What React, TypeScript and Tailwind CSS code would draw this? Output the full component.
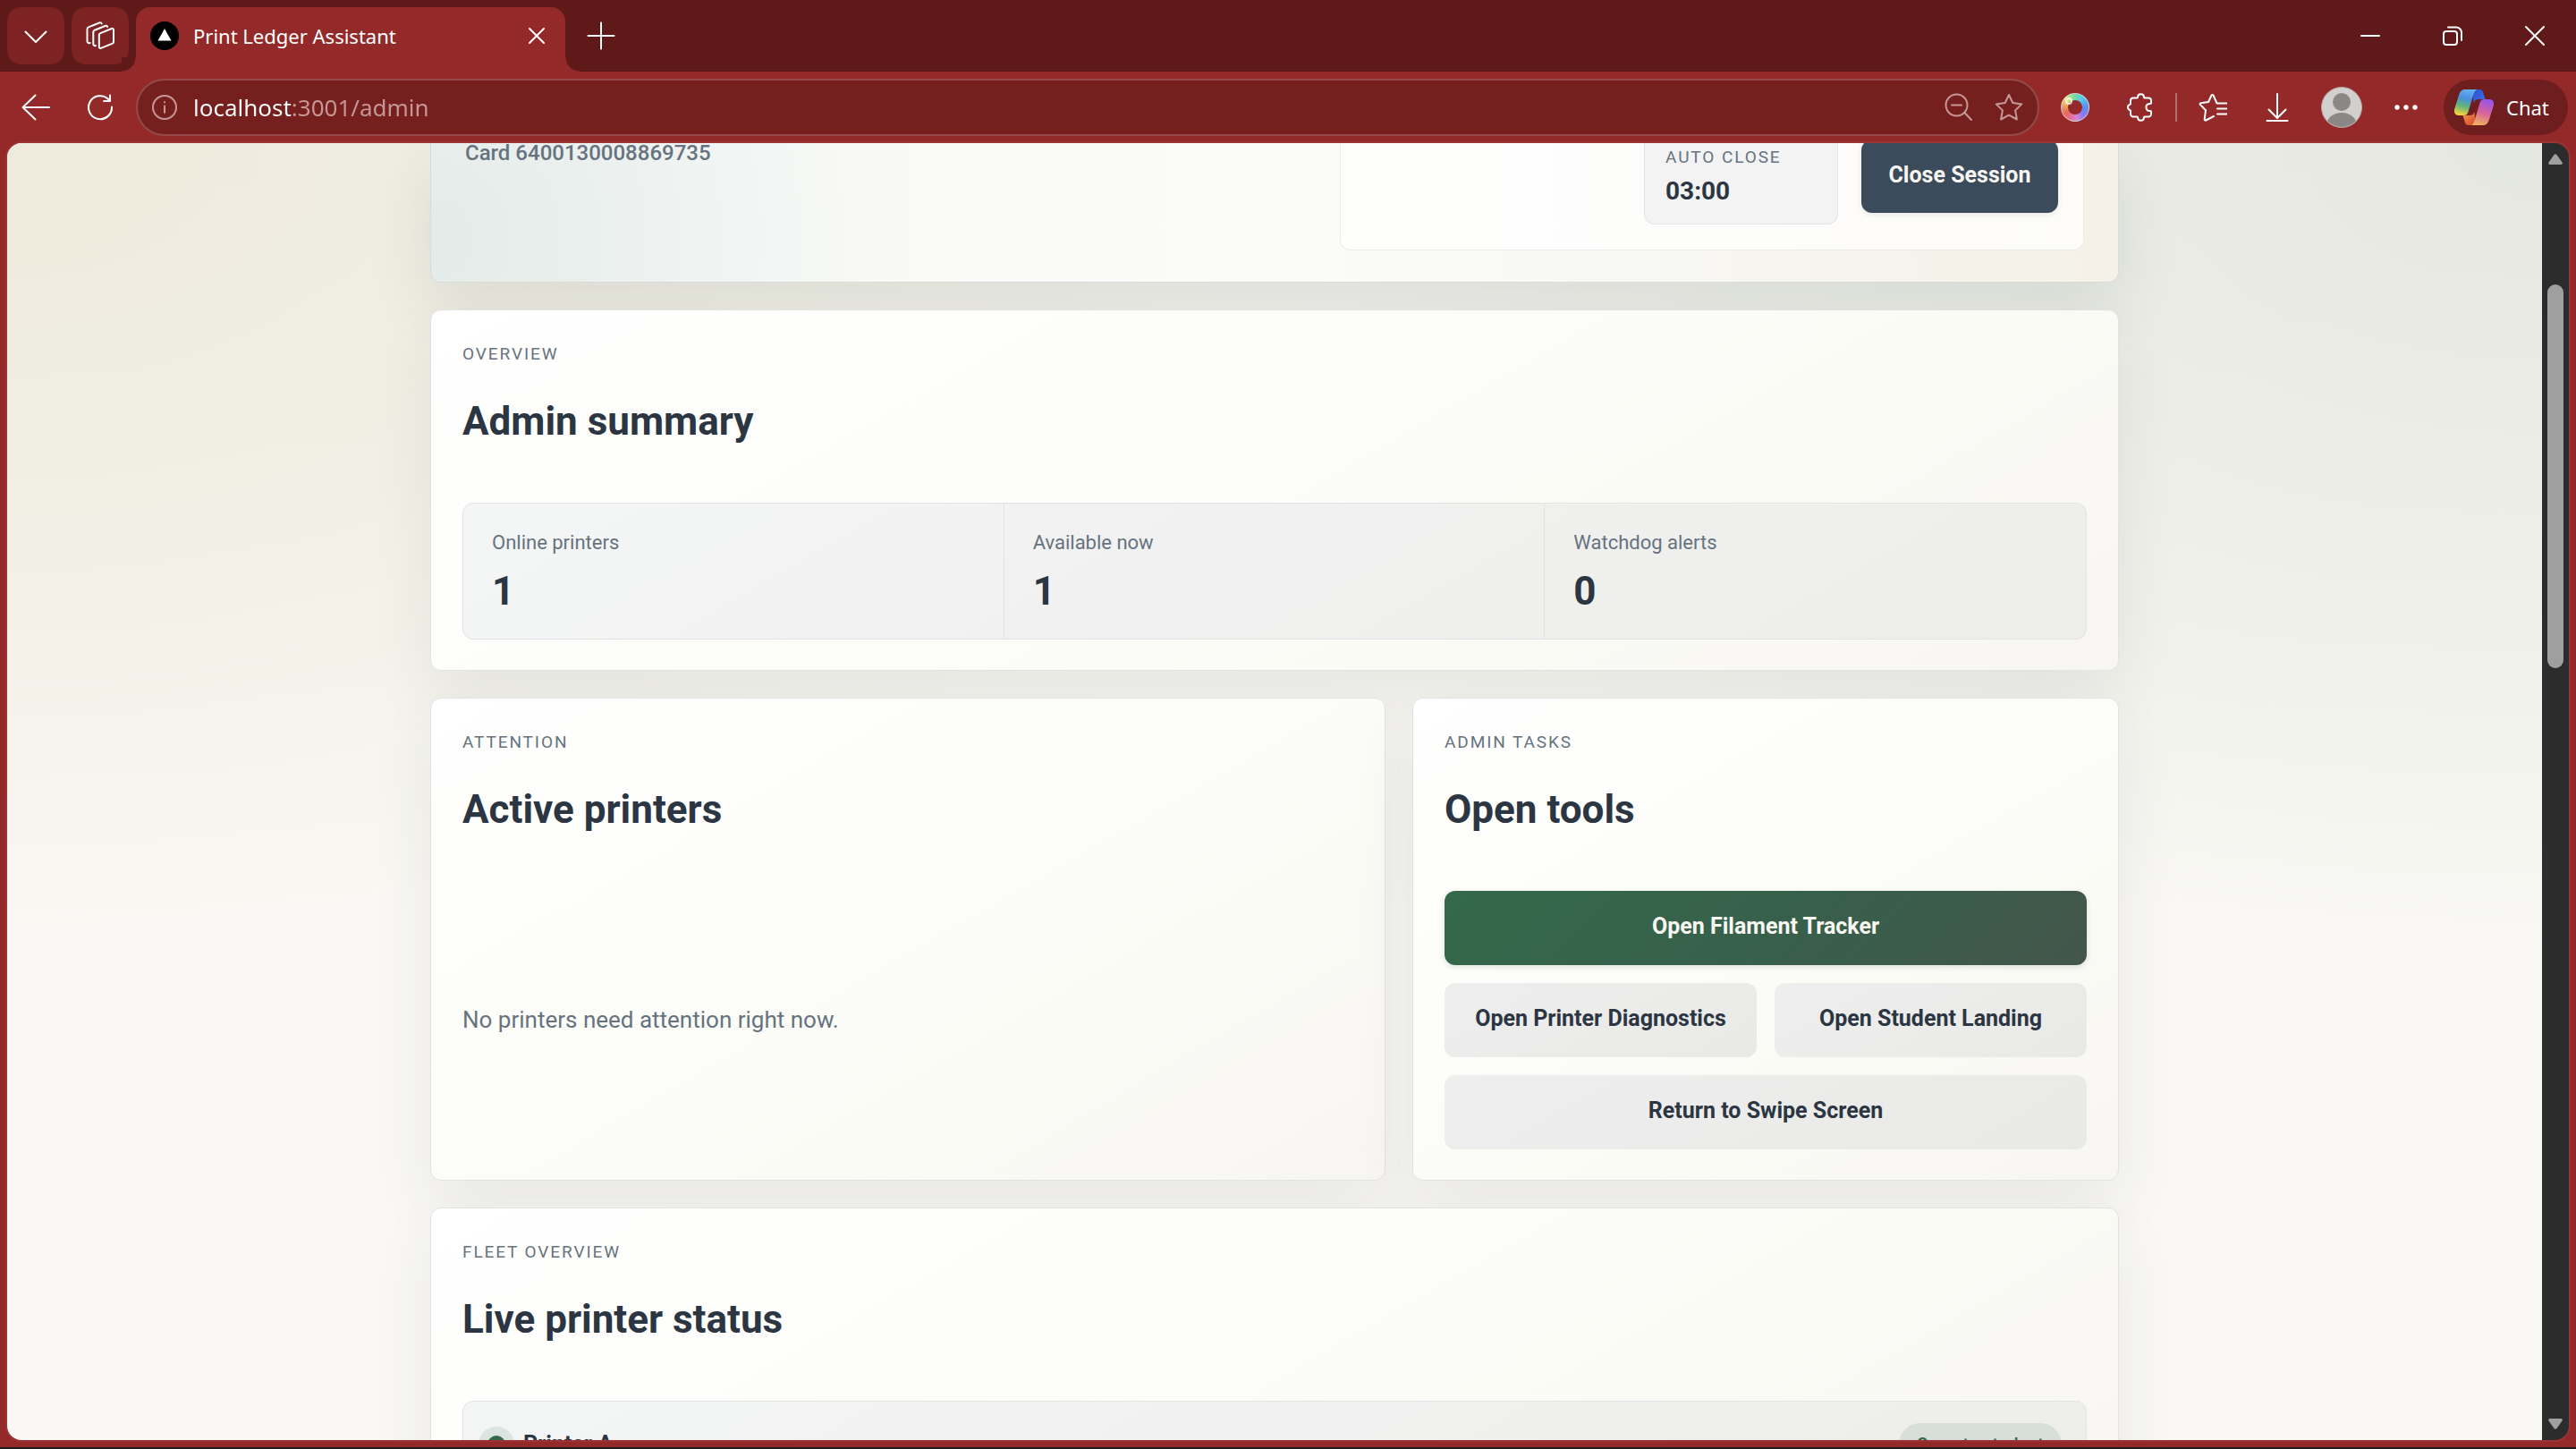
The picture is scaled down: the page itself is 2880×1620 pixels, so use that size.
import type { ReactNode } from "react";
import { clsx } from "clsx";

const stats = [
  { label: "Online printers", value: "1" },
  { label: "Available now", value: "1" },
  { label: "Watchdog alerts", value: "0" },
];

const tools = [
  { label: "Open Filament Tracker", wide: true, primary: true },
  { label: "Open Printer Diagnostics" },
  { label: "Open Student Landing" },
  { label: "Return to Swipe Screen", wide: true },
];

function IconButton({ label, className, children }: { label: string; className?: string; children: ReactNode }) {
  return (
    <button aria-label={label} className={clsx("flex shrink-0 items-center justify-center", className)}>
      {children}
    </button>
  );
}

function Line({ d, size = 32, className = "text-white" }: { d: string; size?: number; className?: string }) {
  return (
    <svg
      width={size}
      height={size}
      viewBox="0 0 32 32"
      fill="none"
      stroke="currentColor"
      strokeWidth="2"
      strokeLinecap="round"
      strokeLinejoin="round"
      className={className}
    >
      <path d={d} />
    </svg>
  );
}

function CopilotLogo() {
  return (
    <svg width="44" height="40" viewBox="0 0 44 40">
      <defs>
        <linearGradient id="cp-left" x1="0.6" y1="0" x2="0.35" y2="1">
          <stop offset="0" stopColor="#62b2f2" />
          <stop offset="0.35" stopColor="#4a8fe0" />
          <stop offset="0.65" stopColor="#5fb27c" />
          <stop offset="1" stopColor="#f4d53c" />
        </linearGradient>
        <linearGradient id="cp-right" x1="0.6" y1="0" x2="0.35" y2="1">
          <stop offset="0" stopColor="#9657e6" />
          <stop offset="0.5" stopColor="#d8629d" />
          <stop offset="1" stopColor="#f0b25c" />
        </linearGradient>
        <linearGradient id="cp-top" x1="0" y1="0" x2="1" y2="1">
          <stop offset="0" stopColor="#2b52d4" />
          <stop offset="1" stopColor="#3f6ee0" />
        </linearGradient>
        <linearGradient id="cp-bottom" x1="0" y1="0" x2="1" y2="1">
          <stop offset="0" stopColor="#f09a4a" />
          <stop offset="1" stopColor="#d9432f" />
        </linearGradient>
      </defs>
      <path d="M20 0h8c3 0 4 2 4.600 5l2 6h-7c-3 0-5 1-6 4z" fill="url(#cp-top)" />
      <path d="M24 40h-8c-3 0-4-2-4.600-5L9.500 29h7c3 0 5-1 6-4z" fill="url(#cp-bottom)" />
      <path d="M12 0h14c-2 0-3.500 2-4.500 5l-6 20c-1 3-2.500 4-5 4H5c-4 0-6-3-4.700-7.500l5-16C6.500 2 8.500 0 12 0z" fill="url(#cp-left)" />
      <path d="M32 40H18c2 0 3.500-2 4.500-5l6-20c1-3 2.500-4 5-4H39c4 0 6 3 4.700 7.500l-5 16C37.500 38 35.500 40 32 40z" fill="url(#cp-right)" />
    </svg>
  );
}

function TabStrip() {
  return (
    <div className="flex h-20 shrink-0 items-end bg-[#5f1919] shadow-[inset_0_-1px_0_#541414]">
      <div className="flex gap-2 self-center px-2">
        <IconButton label="Tab actions" className="h-16 w-16 rounded-2xl bg-[#7d2323]">
          <Line d="M4.500 11.500 16 23 27.500 11.500" />
        </IconButton>
        <IconButton label="Workspaces" className="h-16 w-16 rounded-2xl bg-[#7d2323]">
          <Line d="M16.200 13.200 28.800 8a1.500 1.500 0 0 1 2.200 1.400v13.400c0 .8-.5 1.500-1.200 1.800l-13 5.300a1.500 1.500 0 0 1-2-1.400V15c0-.8.6-1.500 1.400-1.800zM11 27c-1.800.5-2.700-.4-2.700-1.900V11.800c0-1 .6-1.700 1.500-2.100L21.500 5c1.200-.5 2.200-.1 2.600.9M4.600 24C2.600 24.500 1.500 23.600 1.500 22V8.500c0-1 .6-1.700 1.500-2.100L15 1.500c1.200-.5 2.200-.1 2.600.9" />
        </IconButton>
      </div>
      <div className="relative flex h-[72px] w-[480px] items-center rounded-t-2xl bg-[#942929] pr-3 pb-2 pl-4">
        <span className="absolute bottom-0 -left-4 h-4 w-4 bg-[radial-gradient(circle_at_0_0,#5f1919_15px,#942929_16px)]" />
        <span className="absolute -right-4 bottom-0 h-4 w-4 bg-[radial-gradient(circle_at_100%_0,#5f1919_15px,#942929_16px)]" />
        <svg width="32" height="32" viewBox="0 0 32 32">
          <circle cx="16" cy="16" r="16" fill="#000" />
          <path d="M16 8 23.500 21.500h-15z" fill="#fff" />
        </svg>
        <span className="ml-4 flex-1 text-[22px] text-white">Print Ledger Assistant</span>
        <IconButton label="Close tab" className="h-10 w-10">
          <Line d="M8 8 24 24M24 8 8 24" />
        </IconButton>
      </div>
      <IconButton label="New tab" className="h-20 w-20">
        <Line d="M16 1.500v29M1.500 16h29" />
      </IconButton>
      <div className="ml-auto flex self-stretch">
        <IconButton label="Minimize" className="w-[92px]">
          <Line d="M6 16h20" />
        </IconButton>
        <IconButton label="Restore" className="w-[92px]">
          <Line d="M9 11h9a3 3 0 0 1 3 3v9a3 3 0 0 1-3 3H9a3 3 0 0 1-3-3v-9a3 3 0 0 1 3-3zM11 6.500h9a6 6 0 0 1 6 6V21" />
        </IconButton>
        <IconButton label="Close" className="w-[92px]">
          <Line d="M6 6 26 26M26 6 6 26" />
        </IconButton>
      </div>
    </div>
  );
}

function Toolbar() {
  return (
    <div className="flex h-20 shrink-0 items-center bg-[#942929] pr-[9px] pl-1">
      <IconButton label="Back" className="h-16 w-[72px]">
        <Line d="M31 16H1.500M15.500 2.500 1.500 16l14 13.500" />
      </IconButton>
      <IconButton label="Refresh" className="h-16 w-[72px]">
        <Line d="M29 15.500A13 13 0 1 1 25 6.800L26.500 8.500M27 2.500V9h-7" />
      </IconButton>
      <div className="mx-1 flex h-16 flex-1 items-center rounded-full border-2 border-[#94494a] bg-[#75201f] pr-1 pl-3.5">
        <Line d="M16 3a13 13 0 1 1 0 26 13 13 0 0 1 0-26zM16 14.500v7.500M16 10v.5" className="text-[#c79797]" />
        <input
          aria-label="Address"
          defaultValue="localhost:3001/admin"
          className="ml-4 h-10 min-w-0 flex-1 bg-[linear-gradient(90deg,#ffffff_111px,#c79797_111px)] bg-clip-text text-[26px] text-transparent outline-none"
        />
        <IconButton label="Zoom" className="w-14">
          <Line d="M13.500 1.500a12 12 0 1 1 0 24 12 12 0 0 1 0-24zM22.500 22 30 30M8 13.500h11" className="text-[#c79797]" />
        </IconButton>
        <IconButton label="Add to favorites" className="w-14">
          <Line d="m16 2 4.300 9 10 1.400-7.200 7L24.900 29.500 16 24.700 7.100 29.500l1.800-10.100-7.200-7 10-1.400z" className="text-[#c79797]" />
        </IconButton>
      </div>
      <IconButton label="Color extension" className="w-[72px]">
        <span className="relative flex h-8 w-8 items-center justify-center rounded-full border border-white/50 bg-[conic-gradient(#6fd8a8,#5ac3ea_12%,#5a8ff0_25%,#8a78ec_37%,#d684d6_48%,#e2719a_56%,#e8685a_66%,#eca85c_78%,#e6d870_86%,#8fe28c_95%,#6fd8a8)]">
          <span className="h-4 w-4 rounded-full bg-[#942929]" />
          <span className="absolute top-1 left-1 h-2 w-2 rounded-full border-2 border-white/80" />
        </span>
      </IconButton>
      <IconButton label="Extensions" className="w-[72px] pl-1">
        <Line d="M7 5.500h4.200c.6 0 .9-.4.900-1 0-1.900 1.500-3.200 3.400-3.200s3.400 1.300 3.400 3.200c0 .6.300 1 .9 1H24a3 3 0 0 1 3 3V11c0 .6-.4.900-1 .9-2.800 0-4.600 1.700-4.600 4.100s1.800 4.100 4.600 4.100c.6 0 1 .3 1 .9v2.500a3 3 0 0 1-3 3h-4.200c-.6 0-.9.400-.9 1 0 1.900-1.500 3.200-3.400 3.200s-3.400-1.300-3.400-3.200c0-.6-.3-1-.9-1H7a3 3 0 0 1-3-3v-3.600c0-.6-.3-.9-.8-1C1.700 18.600 1 17.400 1 16s.7-2.600 2.200-2.900c.5-.1.800-.4.800-1V8.500a3 3 0 0 1 3-3z" />
      </IconButton>
      <span className="mx-1 h-8 w-0.5 bg-[#b56b6b]" />
      <IconButton label="Favorites" className="w-[72px]">
        <Line d="M20.500 11.500 16.500 2.500a1.200 1.200 0 0 0-2 0L11 10l-8.500 1.300a1 1 0 0 0-.5 1.800L8 19.300 6.700 29.500a1 1 0 0 0 1.500 1L17 26M20.500 11.500H32M21 17.500h11M21 23.500h11" />
      </IconButton>
      <IconButton label="Downloads" className="w-[72px]">
        <Line d="M16 1v27M6.500 18.500 16 28l9.500-9.500M4.500 31h23" />
      </IconButton>
      <IconButton label="Profile" className="w-[72px]">
        <svg width="46" height="46" viewBox="0 0 46 46">
          <clipPath id="avatar">
            <circle cx="23" cy="23" r="22" />
          </clipPath>
          <circle cx="23" cy="23" r="22.500" fill="#d2d0ce" stroke="#b9a5a3" />
          <g clipPath="url(#avatar)" fill="#8a8886">
            <circle cx="23" cy="17" r="10" />
            <ellipse cx="23" cy="42" rx="16.500" ry="13" />
          </g>
        </svg>
      </IconButton>
      <IconButton label="Settings and more" className="w-[72px]">
        <svg width="28" height="8" viewBox="0 0 28 8" fill="#fff">
          <circle cx="4" cy="4" r="2.700" />
          <circle cx="14" cy="4" r="2.700" />
          <circle cx="24" cy="4" r="2.700" />
        </svg>
      </IconButton>
      <button className="ml-1.5 flex h-[62px] w-[139px] items-center gap-3.5 rounded-full bg-[#6e1e1e] pl-3 text-[22px] text-white">
        <CopilotLogo />
        Chat
      </button>
    </div>
  );
}

function Panel({ className, children }: { className?: string; children: ReactNode }) {
  return (
    <section
      className={clsx(
        "rounded-xl border border-[#e1e3e2] bg-[linear-gradient(150deg,#ffffff,#fcfdf8_50%,#f8f6f2)] px-[35px] py-[34px] shadow-[0_30px_70px_rgba(43,54,66,0.08)]",
        className
      )}
    >
      {children}
    </section>
  );
}

function PanelHeader({ eyebrow, title }: { eyebrow: string; title: string }) {
  return (
    <header className="mb-[63px]">
      <p className="mb-8 text-[19px] leading-[30px] tracking-widest text-[#66737f] uppercase">{eyebrow}</p>
      <h2 className="text-[44px] leading-[56px] font-bold">{title}</h2>
    </header>
  );
}

function Hero() {
  return (
    <section className="-mt-1 flex justify-between rounded-b-xl border border-t-0 border-[#d9dbd8] bg-[radial-gradient(circle_at_0_70%,#e3ebe8,transparent_500px),radial-gradient(circle_at_100%_60%,#f5f1e8,transparent_500px),linear-gradient(90deg,#f6f8f7,#fbfbf8_50%,#f4f3ee)] pr-[38px] pb-[35px] pl-[38px] shadow-[0_30px_70px_rgba(43,54,66,0.10)]">
      <p className="text-[24px] leading-[30px] font-medium text-[#66737f]">Card 6400130008869735</p>
      <div className="flex w-[832px] items-start justify-end gap-[26px] rounded-b-xl border border-t-0 border-[#ecebec] bg-white/75 pr-7 pb-7">
        <div className="w-[217px] rounded-b-xl border border-t-0 border-[#e4e5e6] bg-[#f3f3f3] px-[23px] pt-1.5 pb-4">
          <p className="mb-1 text-[19px] leading-7 tracking-widest text-[#66737f] uppercase">Auto close</p>
          <p className="text-[28px] leading-10 font-bold">03:00</p>
        </div>
        <button className="h-[82px] w-[220px] rounded-xl bg-[#3b4b5b] pb-0.5 text-[25px] font-bold text-[#f8f7f2] shadow-[0_2px_6px_rgba(43,54,66,0.10)]">
          Close Session
        </button>
      </div>
    </section>
  );
}

function AdminPage() {
  return (
    <main className="min-w-0 flex-1 overflow-hidden bg-[radial-gradient(1500px_900px_at_0_0,#eeebdc,transparent),radial-gradient(1500px_900px_at_100%_0,#e5e8e0,transparent),linear-gradient(#f3f2ec,#f9f8f4_60%)] font-[Roboto,sans-serif] text-[#2b3642]">
      <div className="mx-auto flex max-w-[1888px] flex-col gap-[30px]">
        <Hero />

        <Panel>
          <PanelHeader eyebrow="Overview" title="Admin summary" />
          <dl className="grid grid-cols-3 divide-x divide-[#e1e3e4] rounded-xl border border-[#e1e3e4] bg-[linear-gradient(150deg,#f4f6f6,#f2f2f3_30%,#edede9)]">
            {stats.map((stat) => (
              <div key={stat.label} className="px-8 pt-7 pb-[25px]">
                <dt className="text-[22px] leading-8 text-[#66737f]">{stat.label}</dt>
                <dd className="mt-2.5 text-[44px] leading-[56px] font-bold">{stat.value}</dd>
              </div>
            ))}
          </dl>
        </Panel>

        <div className="grid grid-cols-[1068fr_790fr] gap-[30px]">
          <Panel className="flex flex-col">
            <PanelHeader eyebrow="Attention" title="Active printers" />
            <p className="flex flex-1 items-center text-[26px] text-[#66737f]">No printers need attention right now.</p>
          </Panel>

          <Panel>
            <PanelHeader eyebrow="Admin tasks" title="Open tools" />
            <div className="grid grid-cols-2 gap-5">
              {tools.map((tool) => (
                <button
                  key={tool.label}
                  className={clsx(
                    "h-[83px] rounded-xl pb-1 text-[25px] font-bold",
                    tool.wide && "col-span-2",
                    tool.primary
                      ? "bg-[linear-gradient(135deg,#34694a,#37604b_50%,#43564b)] text-[#f8f7f2] shadow-[0_2px_6px_rgba(43,54,66,0.15)]"
                      : "bg-[linear-gradient(150deg,#eeeeef,#e9e9e6)]"
                  )}
                >
                  {tool.label}
                </button>
              ))}
            </div>
          </Panel>
        </div>

        <Panel>
          <PanelHeader eyebrow="Fleet overview" title="Live printer status" />
          <div className="flex items-center rounded-t-xl border border-[#e1e3e4] bg-[linear-gradient(150deg,#f4f6f6,#f2f2f3_30%,#edede9)] py-6 pr-[27px] pl-[17px]">
            <span className="mr-2.5 flex h-10 w-10 items-center justify-center rounded-full bg-[#dce4e0]">
              <span className="h-5 w-5 rounded-full bg-[#33694a]" />
            </span>
            <h3 className="flex-1 text-[25px] font-bold">Printer A</h3>
            <span className="rounded-full bg-[#d8dfda] px-5 py-2 text-[20px] leading-8 font-medium text-[#33694a]">
              Open to student
            </span>
          </div>
        </Panel>
      </div>
    </main>
  );
}

function Scrollbar() {
  return (
    <div className="flex w-[30px] shrink-0 flex-col items-center bg-[#2c2c2c] py-3">
      <svg width="16" height="12" viewBox="0 0 16 12" fill="#9f9f9f">
        <path d="M6.500 1a2 2 0 0 1 3 0l6 8.500c.8 1.200 0 2.500-1.500 2.500H2C.5 12-.3 10.700.5 9.500z" />
      </svg>
      <div className="flex w-full flex-1 flex-col items-center">
        <div className="flex-[134]" />
        <div className="w-[18px] flex-[429] rounded-full bg-[#9f9f9f]" />
        <div className="flex-[840]" />
      </div>
      <svg width="16" height="12" viewBox="0 0 16 12" fill="#9f9f9f">
        <path d="M6.500 11a2 2 0 0 0 3 0l6-8.500C16.300 1.300 15.500 0 14 0H2C.5 0-.3 1.300.5 2.500z" />
      </svg>
    </div>
  );
}

export default function App() {
  return (
    <div className="flex h-screen flex-col overflow-hidden border-b-2 border-[#1d1d1d] bg-[#942929] font-['Noto_Sans','Open_Sans',sans-serif]">
      <TabStrip />
      <Toolbar />
      <div className="mx-2 mb-2 flex min-h-0 flex-1 overflow-hidden rounded-2xl shadow-[0_0_0_2px_#9b3335]">
        <AdminPage />
        <Scrollbar />
      </div>
    </div>
  );
}
